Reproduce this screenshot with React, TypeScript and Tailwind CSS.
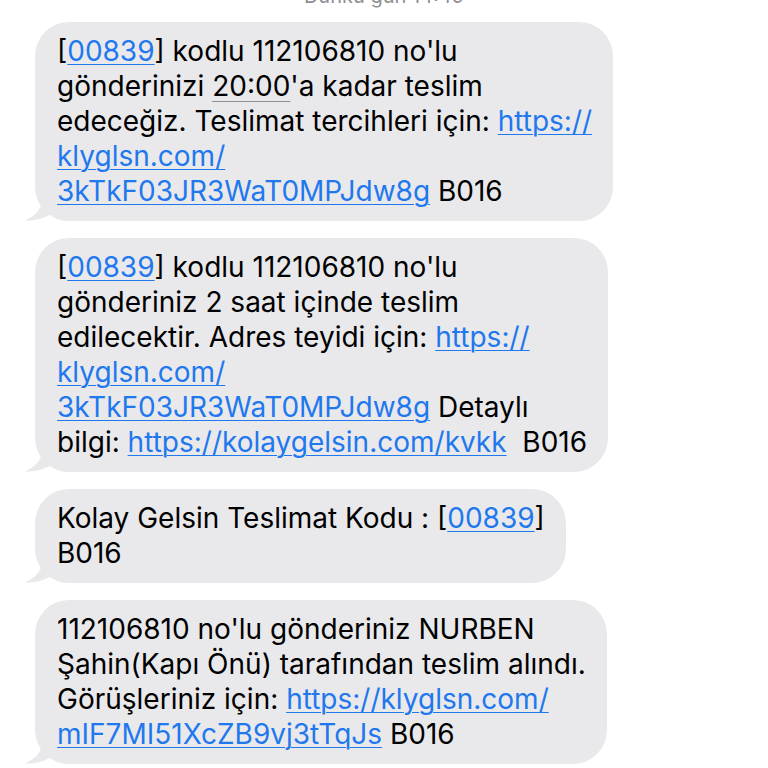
import type { ReactNode } from 'react';

function Link({ children }: { children: ReactNode }) {
  return <span className="text-[#1f78ee] underline decoration-1 underline-offset-[3px]">{children}</span>;
}

function Bubble({ children }: { children: ReactNode }) {
  return (
    <div className="relative w-fit">
      <div className="relative z-10 rounded-[34px] bg-[#e9e9eb] py-[12px] pl-[22px] pr-[21px]">{children}</div>
      <svg
        className="absolute bottom-0 left-[-10px] z-0"
        width="30"
        height="26"
        viewBox="0 0 30 26"
        aria-hidden
      >
        <path d="M18 0 C18 12 12 20 0 25.5 C10 26 20 23 28 18 L28 0 Z" fill="#e9e9eb" />
      </svg>
    </div>
  );
}

export default function App() {
  return (
    <div className="min-h-[768px] w-[768px] overflow-hidden bg-white font-['Inter','Liberation_Sans',sans-serif] text-[28px] leading-[35px] text-black">
      <div className="-mt-[14px] h-[22px] text-center text-[20px] leading-[20px] text-[#8e8e93]">Dünkü gün 14:49</div>
      <div className="flex flex-col gap-[17px] pl-[35px] pt-[14px]">
        <Bubble>
          [<Link>00839</Link>] kodlu 112106810 no'lu
          <br />
          gönderinizi <span className="underline decoration-[#8e8e93] decoration-1 underline-offset-[5px]">20:00</span>'a kadar teslim
          <br />
          edeceğiz. Teslimat tercihleri için: <Link>https://</Link>
          <br />
          <Link>klyglsn.com/</Link>
          <br />
          <Link>3kTkF03JR3WaT0MPJdw8g</Link> B016
        </Bubble>
        <Bubble>
          [<Link>00839</Link>] kodlu 112106810 no'lu
          <br />
          gönderiniz 2 saat içinde teslim
          <br />
          edilecektir. Adres teyidi için: <Link>https://</Link>
          <br />
          <Link>klyglsn.com/</Link>
          <br />
          <Link>3kTkF03JR3WaT0MPJdw8g</Link> Detaylı
          <br />
          bilgi: <Link>https://kolaygelsin.com/kvkk</Link>&nbsp; B016
        </Bubble>
        <Bubble>
          Kolay Gelsin Teslimat Kodu : [<Link>00839</Link>]
          <br />
          B016
        </Bubble>
        <Bubble>
          112106810 no'lu gönderiniz NURBEN
          <br />
          Şahin(Kapı Önü) tarafından teslim alındı.
          <br />
          Görüşleriniz için: <Link>https://klyglsn.com/</Link>
          <br />
          <Link>mIF7MI51XcZB9vj3tTqJs</Link> B016
        </Bubble>
      </div>
    </div>
  );
}
